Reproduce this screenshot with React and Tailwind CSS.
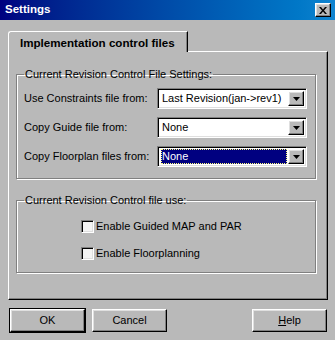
import React from "react";

const raised =
  "border border-t-white border-l-white border-r-black border-b-black shadow-[inset_-1px_-1px_0_#808080,inset_1px_1px_0_#dfdfdf]";
const sunken =
  "border border-t-[#808080] border-l-[#808080] border-r-white border-b-white shadow-[inset_1px_1px_0_#000,inset_-1px_-1px_0_#dfdfdf]";

function Arrow() {
  return (
    <svg width="7" height="4" viewBox="0 0 7 4">
      <path d="M0 0h7L3.5 4z" fill="#000" />
    </svg>
  );
}

function Combo({ value, focused }) {
  return (
    <div className={`w-[150px] h-[21px] flex items-stretch p-[2px] bg-white ${sunken}`}>
      <div className="flex-1 flex items-center pl-[1px] pr-[1px]">
        <div
          className={`h-[15px] flex-1 flex items-center pl-[1px] ${
            focused
              ? "bg-[#000080] text-white outline outline-1 outline-dotted outline-[#ffff80] -outline-offset-1"
              : "text-black"
          }`}
        >
          {value}
        </div>
      </div>
      <div className={`w-[16px] flex items-center justify-center bg-[#b9b9b9] ${raised}`}>
        <Arrow />
      </div>
    </div>
  );
}

function Row({ label, value, focused }) {
  return (
    <div className="flex items-center justify-between h-[21px]">
      <span>{label}</span>
      <Combo value={value} focused={focused} />
    </div>
  );
}

function Check({ label }) {
  return (
    <label className="flex items-center gap-[2px] h-[14px]">
      <span className={`w-[13px] h-[13px] bg-[#f4f4f4] ${sunken}`} />
      <span>{label}</span>
    </label>
  );
}

function Group({ title, className, children }) {
  return (
    <fieldset
      className={`border border-[#808080] shadow-[inset_1px_1px_0_#fff,1px_1px_0_#fff] ${className}`}
    >
      <legend className="ml-[7px] px-[1px] leading-[14px]">{title}</legend>
      {children}
    </fieldset>
  );
}

function Button({ children, isDefault }) {
  return (
    <button
      className={`w-[75px] h-[23px] flex items-center justify-center bg-[#b9b9b9] ${
        isDefault ? "outline outline-1 outline-black" : ""
      } ${raised}`}
    >
      {children}
    </button>
  );
}

export default function App() {
  return (
    <div className="w-[335px] h-[340px] bg-[#b9b9b9] text-black text-[11px] whitespace-nowrap font-['Liberation_Sans',Arial,sans-serif] flex flex-col">
      {/* title bar */}
      <div className="h-[20px] bg-gradient-to-r from-[#000080] to-[#1084d0] flex items-center justify-between pl-[5px] pr-[4px]">
        <span className="text-white font-bold text-[11.5px]">Settings</span>
        <div className={`w-[16px] h-[14px] bg-[#b9b9b9] flex items-center justify-center ${raised}`}>
          <svg width="8" height="7" viewBox="0 0 8 7">
            <path d="M0 0h2l2 2.5L6 0h2L5 3.5 8 7H6L4 4.5 2 7H0l3-3.5z" fill="#000" />
          </svg>
        </div>
      </div>

      <div className="px-[8px] pt-[11px]">
        {/* tab header */}
        <div className="flex">
          <div className="w-[180px] h-[21px] -mb-[1px] relative z-10 bg-[#b9b9b9] border-l border-t border-r border-l-white border-t-white border-r-black rounded-tl-[3px] shadow-[inset_-1px_0_0_#808080] flex items-center pl-[11px] pt-[1px]">
            <span className="font-bold text-[11.6px]">Implementation control files</span>
          </div>
        </div>

        {/* tab panel */}
        <div className="w-[320px] h-[249px] border border-t-white border-l-white border-r-black border-b-black shadow-[inset_-1px_-1px_0_#808080] pl-[7px] pt-[15px]">
          <Group title="Current Revision Control File Settings:" className="w-[300px] h-[112px]">
            <div className="flex flex-col gap-[8px] pt-[7px] pl-[7px] pr-[8px]">
              <Row label="Use Constraints file from:" value="Last Revision(jan->rev1)" />
              <Row label="Copy Guide file from:" value="None" />
              <Row label="Copy Floorplan files from:" value="None" focused />
            </div>
          </Group>

          <Group title="Current Revision Control file use:" className="w-[300px] h-[80px] mt-[14px]">
            <div className="flex flex-col gap-[13px] pt-[12px] pl-[64px]">
              <Check label="Enable Guided MAP and PAR" />
              <Check label="Enable Floorplanning" />
            </div>
          </Group>
        </div>

        {/* buttons */}
        <div className="flex items-center pt-[9px] pl-[2px]">
          <Button isDefault>OK</Button>
          <div className="ml-[7px]">
            <Button>Cancel</Button>
          </div>
          <div className="ml-auto">
            <Button>
              <span>
                <span className="underline">H</span>elp
              </span>
            </Button>
          </div>
        </div>
      </div>
    </div>
  );
}
